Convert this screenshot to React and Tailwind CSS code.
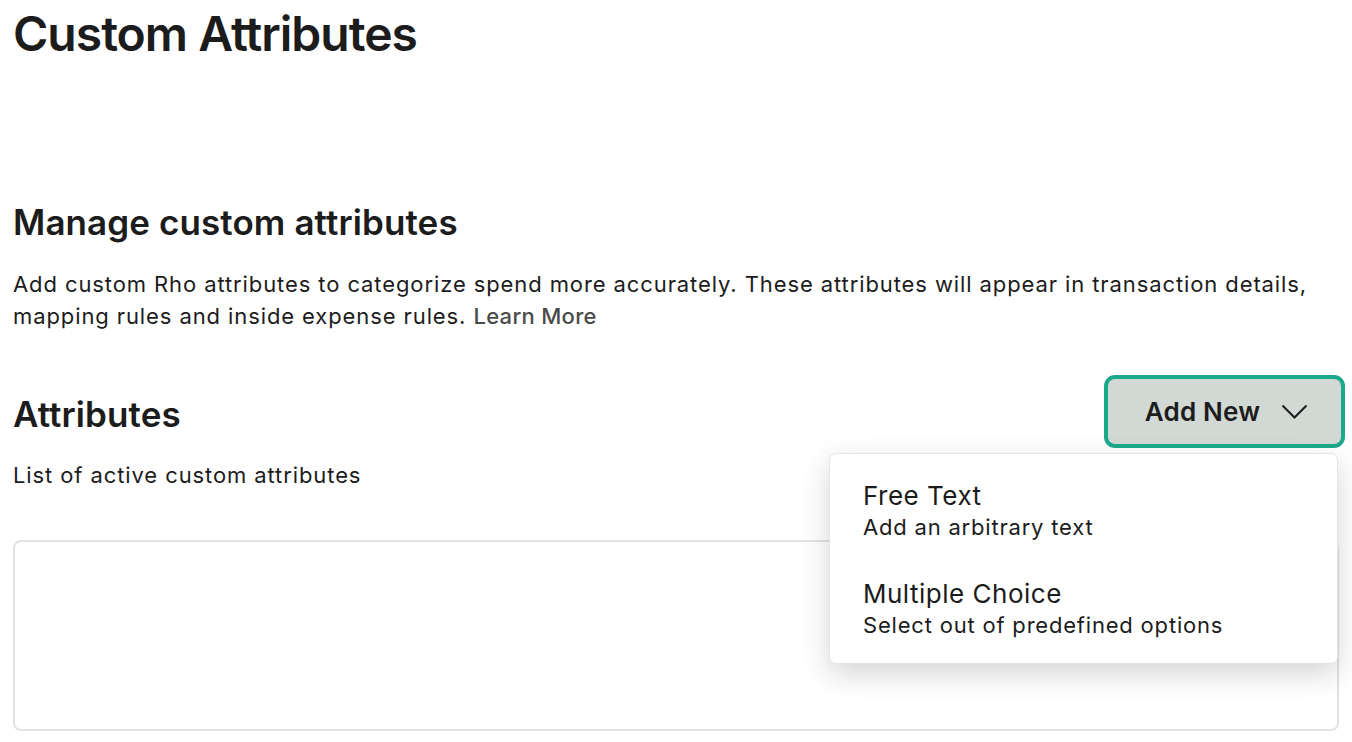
import React, { useState } from "react";

const options = [
  { title: "Free Text", desc: "Add an arbitrary text" },
  { title: "Multiple Choice", desc: "Select out of predefined options" },
];

const App = () => {
  const [open, setOpen] = useState(true);

  return (
    <div className="min-h-screen bg-white px-[13px] text-[#1c1c1c] font-['Inter',sans-serif]">
      <h1 className="pt-[8px] text-[48px] leading-[52px] font-semibold tracking-[-1px]">
        Custom Attributes
      </h1>

      <h2 className="mt-[142px] text-[35px] leading-[40px] font-semibold tracking-[0.1px]">
        Manage custom attributes
      </h2>
      <p className="mt-[26px] text-[22px] leading-[32px] tracking-[0.9px]">
        Add custom Rho attributes to categorize spend more accurately. These attributes will
        appear in transaction details, mapping rules and inside expense rules.{" "}
        <span className="font-medium tracking-[0.3px] text-[#4a4a4a] cursor-pointer">Learn More</span>
      </p>

      {/* header row with dropdown */}
      <div className="relative mt-[43px] flex items-start justify-between">
        <h3 className="mt-[19px] text-[35px] leading-[40px] font-semibold tracking-[0.1px]">
          Attributes
        </h3>
        <button
          onClick={() => setOpen(!open)}
          className="mr-[-6px] flex h-[73px] w-[241px] items-center justify-center gap-[21px] rounded-[11px] border-[4px] border-[#1ba98b] bg-[#d2d8d3] pl-[4px] text-[26px] font-semibold tracking-[0.2px]"
        >
          Add New
          <svg width="27" height="15" viewBox="0 0 27 15" fill="none" stroke="#1c1c1c" strokeWidth="2">
            <path d="M1.5 1.5l12 12 12-12" />
          </svg>
        </button>

        {open && (
          <div className="absolute right-[1px] top-[78px] z-10 w-[509px] rounded-[7px] border border-[#e3e6e4] bg-white pt-[26px] pb-[23px] shadow-[0_10px_28px_rgba(40,50,45,0.2)]">
            {options.map((o, i) => (
              <div key={o.title} className={`px-[33px] ${i > 0 ? "mt-[36px]" : ""}`}>
                <div className="text-[26px] leading-[32px] tracking-[0.5px]">{o.title}</div>
                <div className="text-[22px] leading-[30px] tracking-[0.8px]">{o.desc}</div>
              </div>
            ))}
          </div>
        )}
      </div>

      <p className="mt-[11px] text-[22px] leading-[32px] tracking-[0.9px]">
        List of active custom attributes
      </p>

      <div className="mt-[49px] h-[191px] rounded-[8px] border-2 border-[#e0e3e1]"></div>
    </div>
  );
};

export default App;
